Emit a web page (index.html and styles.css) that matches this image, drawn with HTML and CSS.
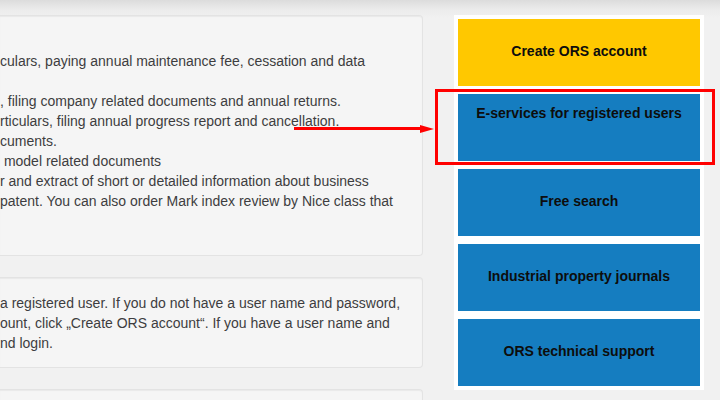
FILE: index.html
```html
<!DOCTYPE html>
<html lang="en">
<head>
<meta charset="utf-8">
<title>ORS</title>
<link rel="stylesheet" href="styles.css">
</head>
<body>
<div class="page">
  <div class="main">
    <div class="well well-first">
      <p class="lines">
        <span class="ln">culars, paying annual maintenance fee, cessation and data</span>
        <span class="ln">&nbsp;</span>
        <span class="ln">, filing company related documents and annual returns.</span>
        <span class="ln">rticulars, filing annual progress report and cancellation.</span>
        <span class="ln">cuments.</span>
        <span class="ln">&nbsp;model related documents</span>
        <span class="ln">r and extract of short or detailed information about business</span>
        <span class="ln">patent. You can also order Mark index review by Nice class that</span>
      </p>
    </div>
    <div class="well well-second">
      <p class="lines">
        <span class="ln">a registered user. If you do not have a user name and password,</span>
        <span class="ln">ount, click „Create ORS account“. If you have a user name and</span>
        <span class="ln">nd login.</span>
      </p>
    </div>
    <div class="well well-third"></div>
  </div>
  <nav class="side">
    <a class="btn btn-yellow">Create ORS account</a>
    <a class="btn btn-blue btn-top">E-services for registered users</a>
    <a class="btn btn-blue">Free search</a>
    <a class="btn btn-blue">Industrial property journals</a>
    <a class="btn btn-blue">ORS technical support</a>
  </nav>
  <div class="mark-box"></div>
  <div class="mark-arrow">
    <span class="arrow-line"></span>
    <span class="arrow-head"></span>
  </div>
</div>
</body>
</html>
```

FILE: styles.css
```css
html, body {
  margin: 0;
  padding: 0;
}
body {
  width: 720px;
  height: 400px;
  overflow: hidden;
  background: linear-gradient(#dcdcdc 0px, #ececec 10px, #f1f1f1 18px, #f1f1f1 100%);
  font-family: "Liberation Sans", Arial, sans-serif;
}
.page {
  position: relative;
  display: flex;
  align-items: flex-start;
  padding-top: 15px;
  gap: 31px;
  height: 385px;
}
.main {
  width: 423px;
  display: flex;
  flex-direction: column;
  gap: 21px;
  flex: none;
}
.well {
  background: #f5f5f5;
  border: 1px solid #e3e3e3;
  border-left: none;
  border-radius: 0 4px 4px 0;
  box-shadow: inset 0 1px 1px rgba(0,0,0,0.05);
  box-sizing: border-box;
}
.well-first {
  height: 241px;
  padding-top: 35px;
}
.well-second {
  height: 91px;
  padding-top: 15px;
}
.well-third {
  height: 11px;
  border-bottom: none;
  border-radius: 0 4px 0 0;
}
.lines {
  margin: 0;
  font-size: 14px;
  line-height: 20px;
  color: #3d3d40;
  white-space: nowrap;
}
.ln {
  display: block;
}
.side {
  width: 250px;
  flex: none;
  background: #fff;
  padding: 4px;
  box-sizing: border-box;
  display: flex;
  flex-direction: column;
  gap: 8px;
}
.btn {
  height: 67px;
  display: flex;
  align-items: center;
  justify-content: center;
  font-weight: bold;
  font-size: 14px;
  line-height: 18px;
  color: #0d0d0d;
  text-decoration: none;
  padding-bottom: 4px;
  box-sizing: border-box;
}
.btn-yellow {
  background: #ffc800;
}
.btn-blue {
  background: #157dc0;
}
.btn-top {
  align-items: flex-start;
  padding-top: 10px;
  padding-bottom: 0;
}
.mark-box {
  position: absolute;
  left: 435px;
  top: 89px;
  width: 280px;
  height: 76px;
  border: 3px solid #f00;
  box-sizing: border-box;
}
.mark-arrow {
  position: absolute;
  left: 294px;
  top: 124px;
  width: 140px;
  height: 9px;
  display: flex;
  align-items: center;
}
.arrow-line {
  flex: 1;
  height: 3px;
  background: #f00;
}
.arrow-head {
  width: 0;
  height: 0;
  border-top: 4.5px solid transparent;
  border-bottom: 4.5px solid transparent;
  border-left: 14px solid #f00;
}
```
